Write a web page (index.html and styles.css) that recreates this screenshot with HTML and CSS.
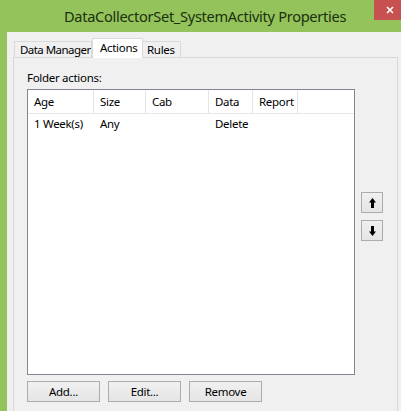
FILE: index.html
```html
<!DOCTYPE html>
<html>
<head>
<meta charset="utf-8">
<link rel="stylesheet" href="styles.css">
</head>
<body>
<div class="window">
  <div class="titlebar">
    <div class="title">DataCollectorSet_SystemActivity Properties</div>
    <div class="close">
      <svg width="8" height="8" viewBox="0 0 8 8"><path d="M1 1L7 7M7 1L1 7" stroke="#fff" stroke-width="1.6"/></svg>
    </div>
  </div>
  <div class="client">
    <div class="tabs">
      <div class="tab tab-dm">Data Manager</div>
      <div class="tab tab-active">Actions</div>
      <div class="tab tab-rules">Rules</div>
    </div>
    <div class="page">
      <div class="label">Folder actions:</div>
      <div class="main">
        <div class="list">
          <div class="row head">
            <div class="cell c-age">Age</div>
            <div class="cell c-size">Size</div>
            <div class="cell c-cab">Cab</div>
            <div class="cell c-data">Data</div>
            <div class="cell c-report">Report</div>
          </div>
          <div class="row item">
            <div class="cell c-age">1 Week(s)</div>
            <div class="cell c-size">Any</div>
            <div class="cell c-cab"></div>
            <div class="cell c-data">Delete</div>
            <div class="cell c-report"></div>
          </div>
        </div>
        <div class="side">
          <div class="btn sq">
            <svg width="7" height="10" viewBox="0 0 7 10"><path d="M3.5 0L7 4.5H5V10H2V4.5H0Z" fill="#000"/></svg>
          </div>
          <div class="btn sq">
            <svg width="7" height="10" viewBox="0 0 7 10"><path d="M3.5 10L7 5.5H5V0H2V5.5H0Z" fill="#000"/></svg>
          </div>
        </div>
      </div>
      <div class="buttons">
        <div class="btn wide">Add...</div>
        <div class="btn wide">Edit...</div>
        <div class="btn wide">Remove</div>
      </div>
    </div>
  </div>
</div>
</body>
</html>
```

FILE: styles.css
```css
* { box-sizing: border-box; }
html, body { margin: 0; padding: 0; }
body {
  width: 401px;
  height: 411px;
  overflow: hidden;
  font-family: "Noto Sans", "Segoe UI", sans-serif;
  font-size: 11.5px;
  letter-spacing: -0.3px;
  color: #000;
}
.window {
  width: 401px;
  height: 411px;
  overflow: hidden;
  background: #93c35a;
  display: flex;
  flex-direction: column;
}
.titlebar {
  height: 32px;
  display: flex;
  align-items: flex-start;
  flex: none;
}
.title {
  flex: 1;
  text-align: center;
  padding-left: 36px;
  padding-top: 6px;
  font-size: 14.6px;
  letter-spacing: -0.3px;
  line-height: 20px;
  color: #1c2f10;
  white-space: nowrap;
}
.close {
  width: 27px;
  height: 20px;
  background: #c75050;
  display: flex;
  align-items: center;
  padding-left: 12px;
}
.close svg { display: block; }
.client {
  flex: 1;
  min-height: 0;
  margin-left: 7px;
  background: #f0f0f0;
  padding-left: 6px;
  padding-top: 6px;
  display: flex;
  flex-direction: column;
}
.tabs {
  display: flex;
  align-items: flex-end;
  height: 19px;
  flex: none;
  padding-left: 1px;
}
.tab {
  height: 16px;
  border: 1px solid #d9d9d9;
  border-bottom: none;
  background: #f0f0f0;
  line-height: 15px;
  padding-left: 5px;
  white-space: nowrap;
  overflow: hidden;
}
.tab-dm { width: 78px; letter-spacing: -0.55px; }
.tab-active {
  width: 51px;
  height: 20px;
  margin-bottom: -1px;
  position: relative;
  z-index: 1;
  background: #fff;
  line-height: 17px;
  padding-left: 7px;
  border-right: 1px solid #d9d9d9;
}
.tab-rules { width: 38px; border-left: none; padding-left: 4px; }
.page {
  flex: 1;
  min-height: 0;
  width: 385px;
  border: 1px solid #d9d9d9;
  border-bottom: none;
  background: #f0f0f0;
  padding-left: 13px;
  padding-top: 12px;
}
.label {
  height: 15px;
  line-height: 15px;
  margin-bottom: 4px;
}
.main {
  display: flex;
  gap: 6px;
}
.list {
  width: 328px;
  height: 286px;
  border: 1px solid #828790;
  background: #fff;
}
.row {
  display: flex;
}
.head {
  height: 24px;
  border-bottom: 1px solid #e5e5e5;
}
.head .cell {
  border-right: 1px solid #e5e5e5;
  line-height: 23px;
}
.item { height: 20px; }
.item .cell { line-height: 20px; }
.cell {
  padding-left: 6px;
  white-space: nowrap;
  flex: none;
}
.c-age { width: 66px; }
.c-size { width: 52px; }
.c-cab { width: 63px; }
.c-data { width: 44px; }
.c-report { width: 45px; }
.item .cell { border-right: 1px solid transparent; }
.side {
  display: flex;
  flex-direction: column;
  gap: 7px;
  padding-top: 103px;
}
.btn {
  border: 1px solid #acacac;
  background: linear-gradient(#f0f0f0, #e5e5e5);
  display: flex;
  align-items: center;
  justify-content: center;
}
.sq {
  width: 22px;
  height: 21px;
}
.sq svg { display: block; }
.buttons {
  display: flex;
  gap: 8px;
  margin-top: 6px;
}
.wide {
  width: 73px;
  height: 21px;
}
```
